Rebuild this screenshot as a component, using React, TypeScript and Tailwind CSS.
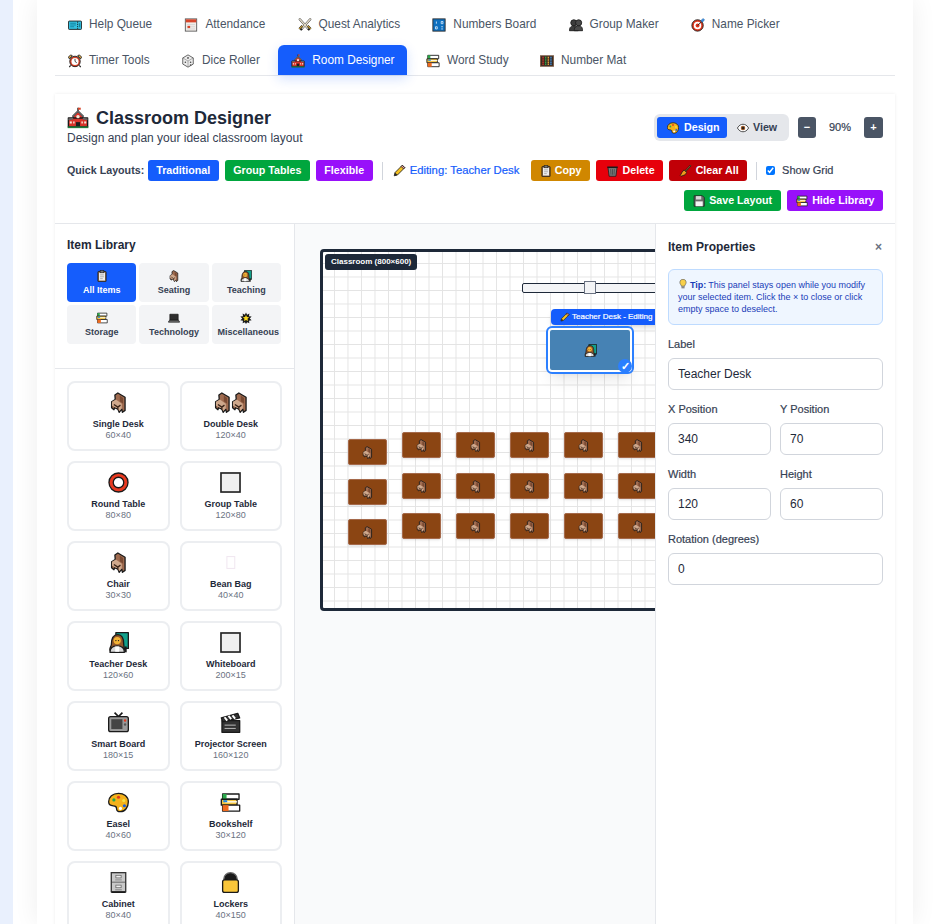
import type { ReactNode } from "react";

const font = "font-['Liberation_Sans',sans-serif]";
const K = "#1a1a1a";

const o = { stroke: K, strokeWidth: 2, strokeLinejoin: "round" as const };

const art: Record<string, ReactNode> = {
  ticket: (
    <>
      <rect x="1" y="7" width="30" height="19" rx="2" fill="#35c0e0" {...o} />
      <path d="M22 8v17" stroke={K} strokeWidth="2" strokeDasharray="3 2" />
      <path d="M5 12h13M5 16h13M5 20h9" stroke="#0e7f9c" strokeWidth="2" />
      <rect x="25" y="12" width="3" height="9" fill="#0e7f9c" />
    </>
  ),
  calendar: (
    <>
      <rect x="3" y="2" width="26" height="28" fill="#f1ece8" stroke="#555" strokeWidth="2" />
      <rect x="4" y="3" width="24" height="7" fill="#d8452a" />
      <path d="M7 15h18M7 20h18M7 25h18" stroke="#c9c9c9" strokeWidth="1.5" />
      <rect x="8" y="18" width="6" height="5" fill="#d8452a" />
    </>
  ),
  swords: (
    <>
      <path d="M4 3l20 22M28 3L8 25" stroke="#3a3a3a" strokeWidth="5" strokeLinecap="round" />
      <path d="M4 3l20 22M28 3L8 25" stroke="#e4dcc8" strokeWidth="3" strokeLinecap="round" />
      <path d="M3 25l7-7M29 25l-7-7" stroke={K} strokeWidth="5" />
      <path d="M3 25l7-7M29 25l-7-7" stroke="#d8a937" strokeWidth="2.5" />
      <path d="M6 28l3-3M26 28l-3-3" stroke={K} strokeWidth="4" />
    </>
  ),
  numbers: (
    <>
      <rect x="2" y="2" width="28" height="28" fill="#0c6fc0" stroke="#2a2a2a" strokeWidth="2" />
      <path d="M10 8v5M8 20h4v5H8zM21 8h4v5h-4zM21 20h4M21 25h4" stroke="#cfe6fa" strokeWidth="2" fill="none" />
    </>
  ),
  busts: (
    <>
      <circle cx="11" cy="11" r="7" fill="#3d3d3d" {...o} />
      <circle cx="22" cy="11" r="7" fill="#4a4a4a" {...o} />
      <path d="M1 29c0-9 5-11 10-11s10 2 10 11z" fill="#3d3d3d" {...o} />
      <path d="M12 29c0-9 5-11 10-11s9 2 9 11z" fill="#4a4a4a" {...o} />
    </>
  ),
  target: (
    <>
      <circle cx="15" cy="17" r="13" fill="#e0391f" {...o} />
      <circle cx="15" cy="17" r="8.5" fill="#fff" />
      <circle cx="15" cy="17" r="4.5" fill="#e0391f" />
      <path d="M15 17L28 5" stroke={K} strokeWidth="2" />
      <path d="M23 5l5-4 3 3-4 5-4-1z" fill="#3b8fe0" stroke="#2a5f99" strokeWidth="1" />
    </>
  ),
  alarm: (
    <>
      <path d="M3 11l7-7-4-2-5 5zM29 11l-7-7 4-2 5 5z" fill="#e8b04a" {...o} />
      <path d="M6 26l-3 4M26 26l3 4" stroke={K} strokeWidth="2.5" />
      <circle cx="16" cy="17" r="12" fill="#d8452a" {...o} />
      <circle cx="16" cy="17" r="8" fill="#fff" />
      <path d="M16 11v6l4 3" stroke={K} strokeWidth="1.8" fill="none" />
    </>
  ),
  die: (
    <>
      <path d="M16 2l12 7v14l-12 7-12-7V9z" fill="#ececec" stroke="#555" strokeWidth="2" strokeLinejoin="round" />
      <path d="M4 9l12 7 12-7M16 16v14" stroke="#888" strokeWidth="1.5" fill="none" />
      <circle cx="16" cy="9" r="2" fill="#444" />
      <circle cx="10" cy="19" r="1.8" fill="#444" />
      <circle cx="22" cy="19" r="1.8" fill="#444" />
      <circle cx="22" cy="25" r="1.8" fill="#444" />
    </>
  ),
  school: (
    <>
      <path d="M16 1v5" stroke={K} strokeWidth="2" />
      <path d="M16 1h4v3h-4z" fill="#d8452a" />
      <path d="M9 13l7-7 7 7v8H9z" fill="#d8332a" {...o} />
      <path d="M2 16h28v13H2z" fill="#d8332a" {...o} />
      <path d="M8 14l8-8 8 8" fill="none" stroke="#666" strokeWidth="2.5" />
      <path d="M9 17l-7 1M23 17l7 1" stroke="#666" strokeWidth="2.5" />
      <rect x="13" y="22" width="6" height="7" fill="#1f1f1f" />
      <rect x="4" y="21" width="3" height="3" fill="#f4e8d8" />
      <rect x="9" y="21" width="2" height="3" fill="#f4e8d8" />
      <rect x="21" y="21" width="2" height="3" fill="#f4e8d8" />
      <rect x="25" y="21" width="3" height="3" fill="#f4e8d8" />
      <circle cx="16" cy="14" r="2.5" fill="#f4e8d8" />
      <path d="M1 29.500h30" stroke="#1f7a3a" strokeWidth="2.5" />
    </>
  ),
  books: (
    <>
      <path d="M4 3h25v8H4z" fill="#fff" {...o} />
      <path d="M4 3h6v8H4z" fill="#2aa84a" />
      <path d="M2 11h24v9H2z" fill="#f4c542" {...o} />
      <path d="M8 15h18" stroke="#fff" strokeWidth="2" />
      <path d="M4 20h26v9H4z" fill="#fff" {...o} />
      <path d="M4 20h9v9H4z" fill="#f06a1d" />
      <path d="M5 14h6" stroke="#1e88e5" strokeWidth="3" />
    </>
  ),
  abacus: (
    <>
      <rect x="1" y="4" width="30" height="24" fill="#3a2a20" stroke="#7a5a44" strokeWidth="2" />
      <path d="M7 6v20" stroke="#d8332a" strokeWidth="3" strokeDasharray="3 1" />
      <path d="M13 6v20" stroke="#2aa84a" strokeWidth="3" strokeDasharray="3 1" />
      <path d="M19 6v20" stroke="#e8a33a" strokeWidth="3" strokeDasharray="3 1" />
      <path d="M25 6v20" stroke="#3b8fe0" strokeWidth="3" strokeDasharray="3 1" />
    </>
  ),
  clipboard: (
    <>
      <rect x="5" y="4" width="22" height="27" rx="1.5" fill="#8a6a4a" {...o} />
      <rect x="8" y="7" width="16" height="21" fill="#eee" />
      <rect x="11" y="1.500" width="10" height="6" fill="#777" stroke={K} strokeWidth="1.500" />
      <path d="M11 13h10M11 18h10M11 23h7" stroke="#999" strokeWidth="2" />
    </>
  ),
  chair: (
    <>
      <path d="M15 1.500l11 6.500v20l-4 3-1-5-4 5-2-5-5-2-1 3-3.500-3v-9l5.500-3.500-.5-7z" fill="#a06c50" {...o} />
      <path d="M18 5.500l5 3.500v9l-5-4z" fill="#7a4a32" />
      <path d="M6 15l6-3.500 9 6.500v7l-4 4-2-4-5-2-4-2z" fill="#cfa88c" />
      <path d="M9 19l6 4 4-3M15 23v4" stroke="#3a2418" strokeWidth="2" fill="none" />
    </>
  ),
  pencil: (
    <>
      <path d="M3 29l2-8L23 3l6 6-18 18z" fill="#f4c020" {...o} />
      <path d="M23 3l6 6-3 3-6-6z" fill="#e8a0a0" {...o} />
      <path d="M3 29l2-8 6 6z" fill="#2a2a2a" />
    </>
  ),
  palette: (
    <>
      <path d="M16 2C7 2 1 8 1 15c0 4 3 6 7 6 3 0 5 1 5 4 0 3 2 5 6 5 7 0 12-7 12-15S24 2 16 2z" fill="#f5b21a" {...o} />
      <circle cx="16" cy="8" r="2.400" fill="#e0391f" />
      <circle cx="9" cy="12" r="2.400" fill="#2aa84a" />
      <circle cx="24" cy="13" r="2.400" fill="#f4e04a" />
      <circle cx="25" cy="21" r="2.400" fill="#1e5fd8" />
      <circle cx="19" cy="25" r="2.400" fill="#fff" />
    </>
  ),
  eye: (
    <>
      <path d="M1 16c5-8 10-10 15-10s10 2 15 10c-5 8-10 10-15 10S6 24 1 16z" fill="#fff" {...o} />
      <circle cx="16" cy="16" r="6" fill="#9a5a2a" />
      <circle cx="16" cy="16" r="3" fill="#1a1a1a" />
    </>
  ),
  floppy: (
    <>
      <path d="M3 2h22l5 5v23H3z" fill="#6a6a6a" {...o} />
      <rect x="8" y="3" width="14" height="9" fill="#d8d8d8" />
      <rect x="7" y="17" width="19" height="13" fill="#f4f4f4" />
    </>
  ),
  trash: (
    <>
      <path d="M4 7h24l-3 23H7z" fill="#7a7a7a" {...o} />
      <path d="M2 6h28" stroke={K} strokeWidth="4" />
      <path d="M11 11l1 15M16 11v15M21 11l-1 15" stroke="#444" strokeWidth="2" />
    </>
  ),
  broom: (
    <>
      <path d="M29 2L15 17" stroke={K} strokeWidth="4.500" strokeLinecap="round" />
      <path d="M29 2L15 17" stroke="#b5792f" strokeWidth="2" strokeLinecap="round" />
      <path d="M12 13l7 7-4 6-11 4-2-2 5-9z" fill="#f09a1a" {...o} />
    </>
  ),
  star: (
    <>
      <path d="M16 1l3 6 6-3-1 7 7 1-5 5 5 5-7 1 1 7-6-3-3 5-3-5-6 3 1-7-7-1 5-5-5-5 7-1-1-7 6 3z" fill={K} />
      <path d="M16 8l2.500 5.500 6 .5-4.500 4 1.500 6-5.500-3-5.500 3 1.500-6-4.500-4 6-.5z" fill="#f8d81c" />
    </>
  ),
  laptop: (
    <>
      <rect x="5" y="6" width="22" height="16" fill="#2e2e2e" {...o} />
      <path d="M1 27l3-5h24l3 5z" fill="#7a7a7a" {...o} />
    </>
  ),
  teacher: (
    <>
      <rect x="12" y="1" width="19" height="24" fill="#11a08a" {...o} />
      <path d="M4 30c-3-4 0-7 1-10 0-8 2-16 10-16s9 7 9 15l1 9z" fill="#95592a" {...o} />
      <circle cx="14" cy="13" r="5.500" fill="#f4b436" />
      <path d="M3 31c0-7 4-10 11-10s11 3 11 10z" fill="#d8d8d8" {...o} />
      <rect x="11" y="22" width="6" height="8" fill="#fff" />
      <path d="M27 22v9" stroke={K} strokeWidth="3" />
      <circle cx="12" cy="13" r="1" fill={K} />
      <circle cx="16" cy="13" r="1" fill={K} />
    </>
  ),
  ring: (
    <>
      <circle cx="16" cy="16" r="14.500" fill="#e8391f" stroke={K} strokeWidth="2" />
      <circle cx="16" cy="16" r="8" fill="#fff" stroke={K} strokeWidth="2" />
    </>
  ),
  square: <rect x="1.500" y="1.500" width="29" height="29" fill="#f0f0f0" stroke="#222" strokeWidth="2.500" />,
  tofu: <rect x="10.500" y="7" width="12" height="18" fill="#fff" stroke="#f0e6f0" strokeWidth="1.500" />,
  tv: (
    <>
      <path d="M10 1l6 6 6-6" stroke={K} strokeWidth="2.500" fill="none" />
      <rect x="1" y="7" width="30" height="23" rx="3" fill="#9a9a9a" {...o} />
      <rect x="5" y="11" width="17" height="15" fill="#444" />
      <circle cx="26" cy="13" r="1.800" fill="#e0391f" />
      <circle cx="26" cy="19" r="1.800" fill="#555" />
    </>
  ),
  clapper: (
    <>
      <rect x="3" y="13" width="27" height="18" fill="#333" {...o} />
      <path d="M7 20h17M7 25h17" stroke="#bbb" strokeWidth="1.500" />
      <path d="M2 9l25-7 3 7-26 6z" fill="#333" {...o} />
      <path d="M7 8l4 5M13 6l4 5M19 5l4 5" stroke="#fff" strokeWidth="3" />
    </>
  ),
  cabinet: (
    <>
      <rect x="5" y="1" width="22" height="29" fill="#c9c9c9" stroke="#333" strokeWidth="2" />
      <path d="M6 15.500h20" stroke="#333" strokeWidth="1" />
      <rect x="12" y="5" width="8" height="4" fill="#eee" stroke="#555" strokeWidth="1" />
      <rect x="12" y="20" width="8" height="4" fill="#eee" stroke="#555" strokeWidth="1" />
      <path d="M11 12h10M11 27h10" stroke="#999" strokeWidth="2" />
      <path d="M5 31h22" stroke={K} strokeWidth="2" />
    </>
  ),
  lock: (
    <>
      <path d="M6 14V10a10 9 0 0120 0v4z" fill={K} stroke="#666" strokeWidth="2" />
      <rect x="4" y="12" width="24" height="19" rx="3" fill="#f9c63a" {...o} />
    </>
  ),
  bulb: (
    <>
      <path d="M16 1c-6 0-10 4-10 10 0 5 4 7 5 12h10c1-5 5-7 5-12 0-6-4-10-10-10z" fill="#f8d04a" stroke="#555" strokeWidth="2" />
      <rect x="11" y="23" width="10" height="7" fill="#888" />
    </>
  ),
};

const Icon = ({ name, className }: { name: string; className: string }) => (
  <svg viewBox="0 0 32 32" className={`shrink-0 ${className}`}>
    {art[name]}
  </svg>
);

const tabRows = [
  [
    ["ticket", "Help Queue"],
    ["calendar", "Attendance"],
    ["swords", "Quest Analytics"],
    ["numbers", "Numbers Board"],
    ["busts", "Group Maker"],
    ["target", "Name Picker"],
  ],
  [
    ["alarm", "Timer Tools"],
    ["die", "Dice Roller"],
    ["school", "Room Designer"],
    ["books", "Word Study"],
    ["abacus", "Number Mat"],
  ],
];

const categories = [
  ["clipboard", "All Items"],
  ["chair", "Seating"],
  ["teacher", "Teaching"],
  ["books", "Storage"],
  ["laptop", "Technology"],
  ["star", "Miscellaneous"],
];

const items = [
  ["chair", "Single Desk", "60×40"],
  ["chair2", "Double Desk", "120×40"],
  ["ring", "Round Table", "80×80"],
  ["square", "Group Table", "120×80"],
  ["chair", "Chair", "30×30"],
  ["tofu", "Bean Bag", "40×40"],
  ["teacher", "Teacher Desk", "120×60"],
  ["square", "Whiteboard", "200×15"],
  ["tv", "Smart Board", "180×15"],
  ["clapper", "Projector Screen", "160×120"],
  ["palette", "Easel", "40×60"],
  ["books", "Bookshelf", "30×120"],
  ["cabinet", "Cabinet", "80×40"],
  ["lock", "Lockers", "40×150"],
];

// desk positions inside the classroom
const desks = [
  [25, 187], [25, 227], [25, 267],
  [79, 180], [133, 180], [187, 180], [241, 180], [295, 180],
  [79, 221], [133, 221], [187, 221], [241, 221], [295, 221],
  [79, 261], [133, 261], [187, 261], [241, 261], [295, 261],
];

const stroke = "[-webkit-text-stroke:0.2px_currentColor]";

const Btn = ({ color, icon, label }: { color: string; icon?: ReactNode; label: string }) => (
  <button className={`${color} h-[21px] px-[8.5px] rounded-[3px] text-white text-[10.7px] font-bold flex items-center gap-[3px] whitespace-nowrap`}>
    {icon}
    {label}
  </button>
);

const Field = ({ label, value }: { label: string; value: string }) => (
  <div className="flex-1 min-w-0">
    <label className={`block text-[11px] text-gray-700 mb-[7px] leading-[13px] ${stroke}`}>{label}</label>
    <input
      className="w-full h-8 border border-gray-300 rounded-md px-[9px] text-xs text-gray-800 bg-white"
      defaultValue={value}
    />
  </div>
);

export default function App() {
  return (
    <div className={`${font} h-screen overflow-hidden bg-white flex`}>
      <div className="w-[13px] shrink-0 bg-[#e9f0fd]" />
      <div className="w-[24px] shrink-0" />
      <div className="w-[876px] shrink-0 bg-white px-[18px] shadow-[0_0_24px_rgba(0,0,0,0.07)]">
        <div className="flex flex-col gap-[6px] pt-[9px] border-b border-gray-200 h-[76px]">
          {tabRows.map((row, i) => (
            <div key={i} className="flex gap-[6px]">
              {row.map(([icon, name]) => (
                <div
                  key={name}
                  className={`h-[30px] pl-[13px] pt-px flex items-center gap-[7px] text-[11.85px] whitespace-nowrap rounded-t-md ${
                    i === 0 ? "pr-[13.2px]" : "pr-[12.4px]"
                  } ${
                    name === "Room Designer"
                      ? "bg-blue-600 text-white shadow-[0_4px_12px_rgba(21,93,252,0.18)]"
                      : "text-gray-600"
                  }`}
                >
                  <Icon name={icon} className="w-[14px] h-[14px]" />
                  {name}
                </div>
              ))}
            </div>
          ))}
        </div>

        <div className="mt-[18px] shadow-[0_0_3px_rgba(0,0,0,0.08)]">
          <div className="h-[130px] px-3 pt-3 border-b border-gray-200">
            <div className="flex justify-between">
              <div>
                <h1 className="text-lg font-bold text-gray-800 leading-6 flex items-center gap-[7px]">
                  <Icon name="school" className="w-[22px] h-[22px]" />
                  Classroom Designer
                </h1>
                <p className="text-xs text-gray-700 leading-[15px] mt-px">Design and plan your ideal classroom layout</p>
              </div>
              <div className="flex items-center h-[27px] mt-[8px]">
                <div className="flex bg-gray-200 rounded-md p-[3px] mr-[9px]">
                  <button className="bg-blue-600 text-white text-[10.7px] font-bold h-[21px] w-[70px] rounded-[3px] flex items-center gap-[5px] pl-[10px]">
                    <Icon name="palette" className="w-3 h-3" />
                    Design
                  </button>
                  <button className="text-gray-700 text-[10.7px] font-bold h-[21px] w-[59px] flex items-center gap-[4px] pl-[10px]">
                    <Icon name="eye" className="w-3 h-3" />
                    View
                  </button>
                </div>
                <button className="w-[18px] h-[21px] rounded-[3px] bg-gray-600 text-white text-[11px] font-bold">−</button>
                <span className={`w-[48px] text-center text-[11px] text-gray-700 ${stroke}`}>90%</span>
                <button className="w-[19px] h-[21px] rounded-[3px] bg-gray-600 text-white text-[11px] font-bold">+</button>
              </div>
            </div>
            <div className="mt-[14px] flex items-center gap-[6px] h-[21px]">
              <span className="text-[10.7px] font-bold text-gray-700 mr-[-2.5px] whitespace-nowrap">Quick Layouts:</span>
              <Btn color="bg-blue-600" label="Traditional" />
              <Btn color="bg-green-600" label="Group Tables" />
              <Btn color="bg-purple-600" label="Flexible" />
              <div className="w-px h-[18px] bg-gray-300 mx-[3px]" />
              <span className={`text-[11.3px] text-blue-600 whitespace-nowrap ml-px mr-[6px] flex items-center gap-[4px] ${stroke}`}>
                <Icon name="pencil" className="w-[13px] h-[13px]" />
                Editing: Teacher Desk
              </span>
              <Btn color="bg-yellow-600" icon={<Icon name="clipboard" className="w-3 h-3" />} label="Copy" />
              <Btn color="bg-red-600" icon={<Icon name="trash" className="w-[15px] h-3" />} label="Delete" />
              <Btn color="bg-red-700" icon={<Icon name="broom" className="w-[15px] h-3" />} label="Clear All" />
              <div className="w-px h-[18px] bg-gray-300 mx-[3px]" />
              <label className={`flex items-center gap-[7px] text-[11px] text-gray-700 whitespace-nowrap ${stroke}`}>
                <input type="checkbox" defaultChecked className="w-[9px] h-[9px]" />
                Show Grid
              </label>
            </div>
            <div className="mt-[9px] flex justify-end gap-[6px]">
              <Btn color="bg-green-600" icon={<Icon name="floppy" className="w-[14px] h-3" />} label="Save Layout" />
              <Btn color="bg-purple-600" icon={<Icon name="books" className="w-[14px] h-3" />} label="Hide Library" />
            </div>
          </div>

          <div className="flex relative h-[720px]">
            <aside className="w-[240px] shrink-0 border-r border-gray-200 bg-white">
              <div className="px-3 pt-[14px] h-[145px] border-b border-gray-200">
                <h2 className="text-xs font-bold text-gray-800 leading-[15px]">Item Library</h2>
                <div className="grid grid-cols-3 gap-[3px] mt-[10px] w-[214px]">
                  {categories.map(([icon, name]) => (
                    <div
                      key={name}
                      className={`h-[39px] rounded flex flex-col items-center justify-center gap-[2px] text-[9px] font-bold leading-3 whitespace-nowrap ${
                        name === "All Items" ? "bg-blue-600 text-white" : "bg-gray-100 text-gray-700"
                      }`}
                    >
                      <Icon name={icon} className="w-3 h-3" />
                      <span className={name === "Miscellaneous" ? "ml-1" : ""}>{name}</span>
                    </div>
                  ))}
                </div>
              </div>
              <div className="grid grid-cols-2 gap-[10px] px-3 pt-3 w-[239px]">
                {items.map(([icon, name, size]) => (
                  <div key={name} className="h-[70px] border-2 border-[#eceef1] rounded-lg flex flex-col items-center pt-[9px]">
                    {icon === "chair2" ? (
                      <div className="flex h-[22px] items-start">
                        <Icon name="chair" className="w-[21px] h-[21px]" />
                        <Icon name="chair" className="w-[21px] h-[21px] -ml-[4px]" />
                      </div>
                    ) : (
                      <div className="h-[22px]">
                        <Icon name={icon} className="w-[21px] h-[21px]" />
                      </div>
                    )}
                    <span className="text-[9px] font-bold text-gray-800 leading-[11px] mt-[5px] whitespace-nowrap">{name}</span>
                    <span className="text-[9px] text-gray-500 leading-[12px] -mt-px">{size}</span>
                  </div>
                ))}
              </div>
            </aside>

            <main className="flex-1 relative bg-gray-50 overflow-hidden">
              <div className="absolute left-[25px] top-[25px] w-[546px] h-[362px] border-[3px] border-gray-800 rounded-[4px] bg-white bg-[linear-gradient(#e4e4e4_1px,transparent_1px),linear-gradient(90deg,#e4e4e4_1px,transparent_1px)] bg-size-[13.5px_13.5px] bg-position-[-2.5px_-2.5px]">
                <span className="absolute left-[2px] top-[2px] bg-gray-800 text-white text-[8px] font-bold rounded-[3px] px-[6px] h-[16px] flex items-center whitespace-nowrap">Classroom (800×600)</span>
                <div className="absolute left-[199px] top-[31px] w-[300px] h-[10px] border border-gray-800 rounded-[2px] bg-gray-100" />
                <div className="absolute left-[261px] top-[29px] w-[12px] h-[13px] border border-gray-500 bg-gray-100" />
                <div className={`absolute left-[228px] top-[57px] w-[140px] h-[16px] bg-blue-600 rounded text-white text-[8px] flex items-center gap-[2px] pl-[9px] whitespace-nowrap shadow-md ${stroke}`}>
                  <Icon name="pencil" className="w-[10px] h-[10px]" />
                  Teacher Desk - Editing
                </div>
                <div className="absolute left-[225px] top-[76px] w-[84px] h-[44px] bg-[#4682b4] rounded-[4px] border-2 border-white outline-2 outline-blue-500 flex items-center justify-center shadow-lg">
                  <Icon name="teacher" className="w-[13px] h-[13px]" />
                  <span className="absolute -right-[2px] -bottom-[3px] w-[14px] h-[14px] rounded-full bg-blue-500 text-white text-[11px] font-bold flex items-center justify-center">✓</span>
                </div>
                {desks.map(([x, y], i) => (
                  <div
                    key={i}
                    className="absolute w-[39px] h-[26px] bg-[#8b4513] border border-[#a5694a] rounded-[2px] shadow-sm flex items-center justify-center"
                    style={{ left: x, top: y }}
                  >
                    <Icon name="chair" className="w-[13px] h-[13px]" />
                  </div>
                ))}
              </div>
            </main>

            <aside className="absolute right-0 top-0 bottom-0 w-[240px] border-l border-gray-200 bg-white px-3 pt-[15px]">
              <div className="flex justify-between items-center">
                <h2 className="text-xs font-bold text-gray-800">Item Properties</h2>
                <span className="text-gray-500 text-xs font-bold mr-[1px]">×</span>
              </div>
              <div className="mt-[14px] h-[56px] border border-blue-200 bg-blue-50 rounded-md px-[9px] py-[9px] text-[9px] leading-3 text-blue-800">
                <Icon name="bulb" className="inline w-[10px] h-[10px] align-[-1px] mr-[2px]" />
                <b className="font-bold mr-[2px]">Tip:</b>
                This panel stays open while you modify your selected item. Click the × to close or click empty space to deselect.
              </div>
              <div className="mt-[13px] flex flex-col gap-[13px]">
                <Field label="Label" value="Teacher Desk" />
                <div className="flex gap-[9px]">
                  <Field label="X Position" value="340" />
                  <Field label="Y Position" value="70" />
                </div>
                <div className="flex gap-[9px]">
                  <Field label="Width" value="120" />
                  <Field label="Height" value="60" />
                </div>
                <Field label="Rotation (degrees)" value="0" />
              </div>
            </aside>
          </div>
        </div>
      </div>
    </div>
  );
}
